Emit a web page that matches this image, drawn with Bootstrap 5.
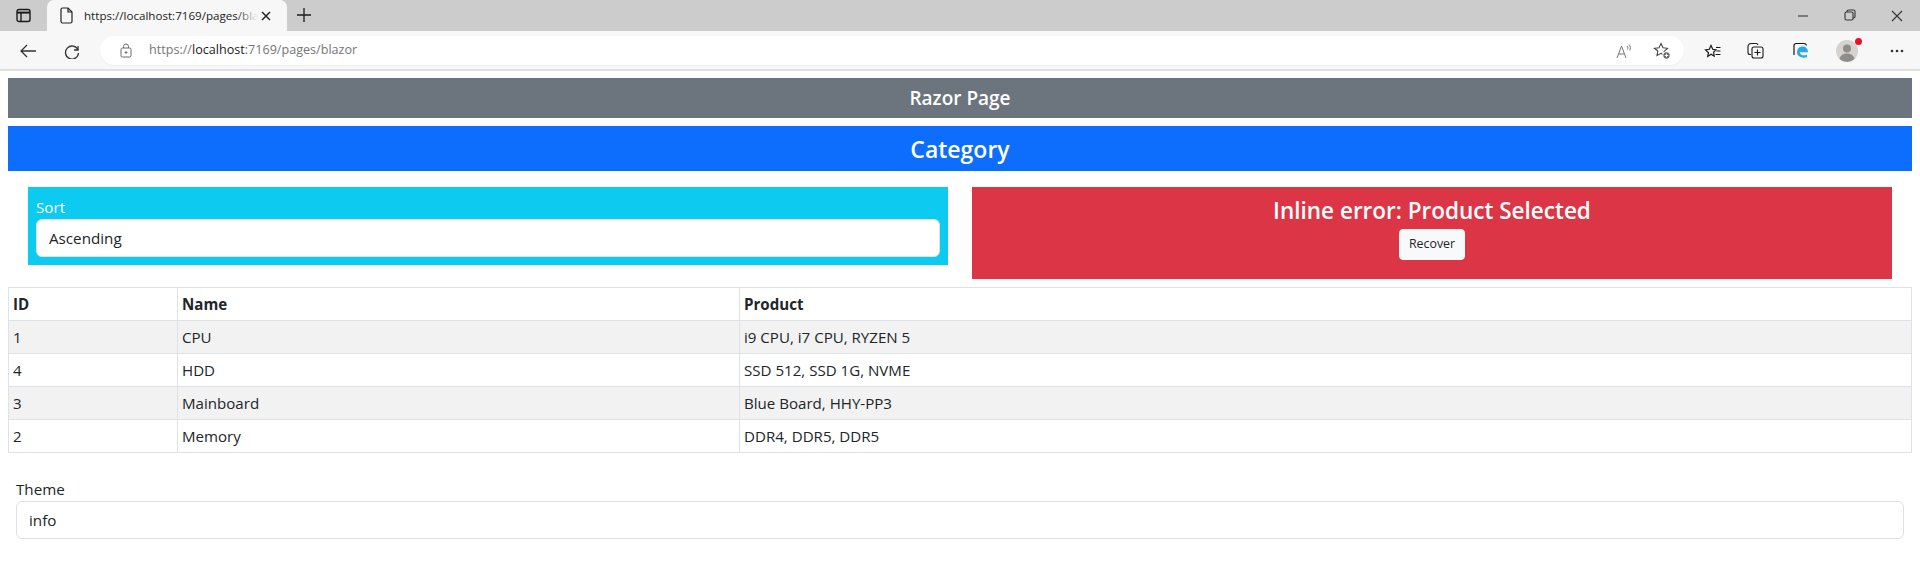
<!doctype html>
<html lang="en"><head><meta charset="utf-8"><title>Razor Page</title>
<link href="https://cdn.jsdelivr.net/npm/bootstrap@5.3.0/dist/css/bootstrap.min.css" rel="stylesheet">
<style>
html,body{height:561px;overflow:hidden}
body{font-family:"Open Sans","Noto Sans",sans-serif;background:#fff;color:#212529;font-size:15.2px}
.chrome-ui{font-family:"Open Sans","Noto Sans",sans-serif}
.tabstrip{height:31px;background:#ccc}
.tab-switch{width:47px}
.browser-tab{width:240px;height:31px;background:#f7f7f7;border-radius:7px 7px 0 0;padding:0 8px 0 13px;margin-top:0}
.tab-title{width:174px;margin-left:11px;font-size:11.6px;white-space:nowrap;overflow:hidden;color:#222;position:relative}
.tab-title::after{content:"";position:absolute;right:0;top:0;bottom:0;width:22px;background:linear-gradient(90deg,rgba(247,247,247,0),#f7f7f7)}
.newtab{margin-left:10px}
.win-ctrl{width:47px}
.toolbar{height:38px;background:#f7f7f7;padding-left:20px;padding-top:5px;padding-bottom:4px}
.toolbar-rule{height:2px;background:#e0e0e0}
.reload-ic{margin-left:28px}
.pill{width:1584px;height:29px;background:#fff;border-radius:15px;margin-left:20px;margin-right:20px;padding-left:20px;padding-right:13px;box-shadow:0 1px 1px #eee}
.url{margin-left:17px;font-size:12.6px;color:#767676}
.url b{font-weight:400;color:#1c1c1c}
.pill-tools{gap:21px}
.right-tools{gap:26px}
.tool-edge{margin-left:2px}
.tool-avatar{margin-left:1px}
.tool-more{margin-left:6px}
.dot-red{position:absolute;top:-2px;right:-4px;width:7px;height:7px;border-radius:50%;background:#e8112d}
.page-wrap{padding:7px 8px 0}
.bar-gray{height:40px;background:#6c757d}
.bar-blue{height:45px;background:#0d6efd;margin-top:8px}
.bar-gray,.bar-blue{color:#fff}
.bar-title-sm{font-size:19px;font-weight:600;margin:0;padding-top:1px}
.bar-title-lg{font-size:23px;font-weight:600;margin:0;padding-top:3px}
.top-row{margin:16px 8px 8px;--bs-gutter-x:24px}
.sort-box{background:#0dcaf0;height:78px;padding:8px}
.sort-label{color:#fff;height:24px;line-height:24px}
.picker{height:38px;border:1px solid #dee2e6;border-radius:6px;padding:0 12px;font-size:15.2px;line-height:36px;background:#fff;color:#212529}
.err-box{background:#dc3545;height:92px;color:#fff;padding-top:9px}
.err-title{font-size:22.5px;font-weight:600;line-height:29px;margin:0 0 4px}
.recover{font-size:12.4px;height:31px;width:66px;padding:0;color:#212529}
.data-table{margin:0;table-layout:fixed;font-size:15.1px;width:1904px;--bs-table-striped-bg:#f2f2f2;--bs-table-border-color:#dee2e6}
.data-table td,.data-table th{padding:4px;height:33px;line-height:24px}
.col-id{width:169px}
.col-name{width:562px}
.theme-block{margin:24px 8px 0}
.theme-label{height:24px;line-height:24px}
.ic{display:block;flex:none}
</style></head>
<body>
<header class="chrome-ui">
 <div class="tabstrip d-flex align-items-start">
  <div class="tab-switch d-flex justify-content-center pt-2">
   <svg class="ic" width="15" height="15" viewBox="0 0 15 15" fill="none" stroke="#1a1a1a" stroke-width="1.4"><rect x="1" y="1.5" width="13" height="12" rx="2"/><path d="M1 4.6h13" stroke-width="2"/><path d="M5 4.6v8.8" /></svg>
  </div>
  <div class="browser-tab d-flex align-items-center">
   <svg class="ic" width="13" height="17" viewBox="0 0 13 17" fill="none" stroke="#222" stroke-width="1.2"><path d="M1 2.500a1.500 1.500 0 0 1 1.500-1.500H8l4 4v9.500a1.500 1.500 0 0 1-1.500 1.500h-8A1.500 1.500 0 0 1 1 14.500z"/><path d="M8 1v4h4"/></svg>
   <div class="tab-title">https://localhost:7169/pages/blazor</div>
   <svg class="ic ms-auto me-2" width="10" height="10" viewBox="0 0 10 10" stroke="#222" stroke-width="1.5"><path d="M1 1l8 8M9 1l-8 8"/></svg>
  </div>
  <svg class="ic newtab mt-2" width="14" height="14" viewBox="0 0 14 14" stroke="#1a1a1a" stroke-width="1.3"><path d="M7 0v14M0 7h14"/></svg>
  <div class="ms-auto d-flex win-group">
   <div class="win-ctrl d-flex justify-content-center pt-2"><svg class="ic" width="12" height="16" viewBox="0 0 12 16" stroke="#444" stroke-width="1.2"><path d="M1 8h10"/></svg></div>
   <div class="win-ctrl d-flex justify-content-center pt-2"><svg class="ic" width="12" height="16" viewBox="0 0 12 16" fill="none" stroke="#333" stroke-width="1.1"><rect x="1" y="4" width="8" height="8" rx="1.5"/><path d="M3 4V3.500a1.500 1.500 0 0 1 1.500-1.500H9.500A1.500 1.500 0 0 1 11 3.500V8.500A1.500 1.500 0 0 1 9.500 10H9"/></svg></div>
   <div class="win-ctrl d-flex justify-content-center pt-2"><svg class="ic" width="12" height="16" viewBox="0 0 12 16" stroke="#333" stroke-width="1.1"><path d="M1 3l10 10M11 3L1 13"/></svg></div>
  </div>
 </div>
 <div class="toolbar d-flex align-items-center">
  <svg class="ic" width="16" height="14" viewBox="0 0 16 14" fill="none" stroke="#333" stroke-width="1.3"><path d="M16 7H1M7 1L1 7l6 6"/></svg>
  <svg class="ic reload-ic" width="16" height="16" viewBox="0 0 16 16" fill="none" stroke="#333" stroke-width="1.3"><path d="M14 3v4h-4"/><path d="M14 7a6.500 6.500 0 1 0 .5 3"/></svg>
  <div class="pill d-flex align-items-center">
   <svg class="ic" width="12" height="15" viewBox="0 0 12 15" fill="none" stroke="#6a6a6a" stroke-width="1"><rect x="1" y="5" width="10" height="9" rx="1.500"/><path d="M3.500 5V3.500a2.500 2.500 0 0 1 5 0V5"/><circle cx="6" cy="9.500" r=".8" fill="#6a6a6a"/></svg>
   <span class="url">https://<b>localhost</b>:7169/pages/blazor</span>
   <div class="ms-auto d-flex align-items-center pill-tools">
    <svg class="ic" width="16" height="16" viewBox="0 0 16 16" fill="none" stroke="#777" stroke-width="1"><path d="M1 15L5.500 3 10 15M2.800 11h5.400"/><path d="M11 3c1 .8 1 2.500.6 3.500M13 1.500c1.700 1.500 1.700 4.500.6 6"/></svg>
    <svg class="ic" width="18" height="18" viewBox="0 0 18 18" fill="none" stroke="#444" stroke-width="1.1"><path d="M8 1.500l2 4.200 4.500.6-3.300 3.100.8 4.500L8 11.300 4 13.500l.8-4.500L1.500 6.300 6 5.700z"/><circle cx="13.500" cy="13.500" r="3.700" fill="#666" stroke="#fff"/><path d="M13.500 11.700v3.600M11.700 13.500h3.600" stroke="#fff"/></svg>
   </div>
  </div>
  <div class="right-tools d-flex align-items-center">
   <svg class="ic" width="17" height="17" viewBox="0 0 17 17" fill="none" stroke="#1a1a1a" stroke-width="1.2"><path d="M7 1.500l1.800 3.800 3.200.5-2.400 2.400.6 3.800-3.200-1.800L3.700 12.500l.8-3.800L1.500 5.900l3.800-.6z" transform="translate(0,2)"/><path d="M12 5.500h4.500M12.500 9h4M11.500 12.500h5"/></svg>
   <svg class="ic" width="17" height="17" viewBox="0 0 17 17" fill="none" stroke="#1a1a1a" stroke-width="1.1"><path d="M4 12.500H3a2 2 0 0 1-2-2V4.500a3 3 0 0 1 3-3h5a2 2 0 0 1 2 1.500"/><rect x="5" y="5" width="11" height="11" rx="2"/><path d="M10.500 7.500v6M7.500 10.500h6"/></svg>
   <svg class="ic tool-edge" width="17" height="17" viewBox="0 0 17 17" fill="none"><path d="M2 13V3.500A2 2 0 0 1 4 1.500h8a2.500 2.500 0 0 1 2.500 2" stroke="#1a1a1a" stroke-width="1.2"/><path d="M5 10.500c0-4 2.500-6 5.500-6s5.500 2 5.500 5.700H7.800c.2 3 4.500 4 7.200 2.200v2.600c-3.800 1.800-10-.3-10-4.500z" fill="#2ba7ee"/></svg>
   <div class="position-relative tool-avatar" aria-hidden="true">
    <svg class="ic" width="22" height="22" viewBox="0 0 22 22"><circle cx="11" cy="11" r="11" fill="#d5d2cf"/><circle cx="11" cy="8.500" r="4" fill="#8f8c89"/><path d="M3.500 19c1-4 4-5.500 7.500-5.500s6.500 1.500 7.500 5.500a11 11 0 0 1-15 0z" fill="#8f8c89"/></svg>
    <span class="dot-red"></span>
   </div>
   <svg class="ic tool-more" width="14" height="4" viewBox="0 0 14 4" fill="#333"><circle cx="2" cy="2" r="1.300"/><circle cx="7" cy="2" r="1.300"/><circle cx="12" cy="2" r="1.300"/></svg>
  </div>
 </div>
 <div class="toolbar-rule"></div>
</header>
<main class="page-wrap">
 <div class="bar-gray d-flex align-items-center justify-content-center"><h5 class="bar-title-sm">Razor Page</h5></div>
 <div class="bar-blue d-flex align-items-center justify-content-center"><h4 class="bar-title-lg">Category</h4></div>
 <div class="row top-row">
  <div class="col-6">
   <div class="sort-box">
    <div class="sort-label">Sort</div>
    <div class="picker">Ascending</div>
   </div>
  </div>
  <div class="col-6">
   <div class="err-box text-center">
    <h3 class="err-title">Inline error: Product Selected</h3>
    <button type="button" class="btn btn-light btn-sm recover">Recover</button>
   </div>
  </div>
 </div>
 <table class="table table-bordered table-striped data-table">
  <colgroup><col class="col-id"><col class="col-name"><col></colgroup>
  <thead><tr><th>ID</th><th>Name</th><th>Product</th></tr></thead>
  <tbody>
   <tr><td>1</td><td>CPU</td><td>i9 CPU, i7 CPU, RYZEN 5</td></tr>
   <tr><td>4</td><td>HDD</td><td>SSD 512, SSD 1G, NVME</td></tr>
   <tr><td>3</td><td>Mainboard</td><td>Blue Board, HHY-PP3</td></tr>
   <tr><td>2</td><td>Memory</td><td>DDR4, DDR5, DDR5</td></tr>
  </tbody>
 </table>
 <div class="theme-block">
  <div class="theme-label">Theme</div>
  <div class="picker">info</div>
 </div>
</main>
</body></html>
